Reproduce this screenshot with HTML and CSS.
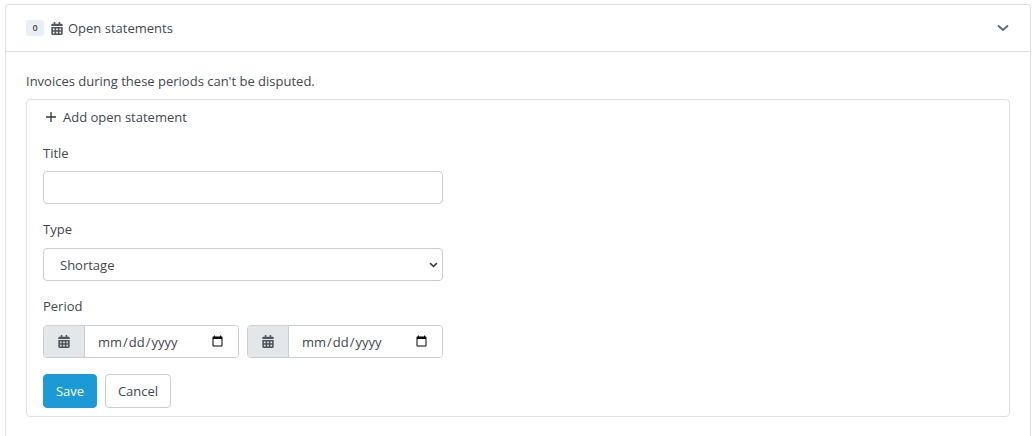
FILE: index.html
```html
<!DOCTYPE html>
<html lang="en">
<head>
    <meta charset="UTF-8">
    <meta name="viewport" content="width=device-width, initial-scale=1.0">
    <title>Open statements</title>
    <link rel="stylesheet" href="styles.css">
</head>
<body>
    <div class="card">
        <div class="card-header">
            <div class="header-title">
                <span class="badge">0</span>
                <svg class="icon-cal" viewBox="0 0 448 512"><path d="M0 464c0 26.500 21.500 48 48 48h352c26.500 0 48-21.500 48-48V192H0v272zm64-196c0-6.600 5.400-12 12-12h40c6.600 0 12 5.400 12 12v40c0 6.600-5.400 12-12 12H76c-6.600 0-12-5.400-12-12v-40zm0 128c0-6.600 5.400-12 12-12h40c6.600 0 12 5.400 12 12v40c0 6.600-5.400 12-12 12H76c-6.600 0-12-5.400-12-12v-40zm128-128c0-6.600 5.400-12 12-12h40c6.600 0 12 5.400 12 12v40c0 6.600-5.400 12-12 12h-40c-6.600 0-12-5.400-12-12v-40zm0 128c0-6.600 5.400-12 12-12h40c6.600 0 12 5.400 12 12v40c0 6.600-5.400 12-12 12h-40c-6.600 0-12-5.400-12-12v-40zm128-128c0-6.600 5.400-12 12-12h40c6.600 0 12 5.400 12 12v40c0 6.600-5.400 12-12 12h-40c-6.600 0-12-5.400-12-12v-40zm0 128c0-6.600 5.400-12 12-12h40c6.600 0 12 5.400 12 12v40c0 6.600-5.400 12-12 12h-40c-6.600 0-12-5.400-12-12v-40zM400 64h-48V16c0-8.800-7.200-16-16-16h-32c-8.800 0-16 7.200-16 16v48H160V16c0-8.800-7.200-16-16-16h-32c-8.800 0-16 7.200-16 16v48H48C21.500 64 0 85.500 0 112v48h448v-48c0-26.500-21.500-48-48-48z"/></svg>
                <span>Open statements</span>
            </div>
            <svg class="chevron" viewBox="0 0 12 8"><path d="M1 1.500L6 6l5-4.500" fill="none" stroke="#5c6873" stroke-width="1.800"/></svg>
        </div>
        <div class="card-body">
            <p class="intro">Invoices during these periods can't be disputed.</p>
            <div class="inner-box">
                <div class="add-row">
                    <svg class="plus" viewBox="0 0 10 10"><path d="M5 0v10M0 5h10" stroke="#33393f" stroke-width="1.300"/></svg>
                    <span>Add open statement</span>
                </div>
                <form class="statement-form">
                    <label class="field-label">Title</label>
                    <input class="form-control title-input" type="text">

                    <label class="field-label type-label">Type</label>
                    <div class="select-wrap">
                        <select class="form-control type-select">
                            <option>Shortage</option>
                        </select>
                        <svg class="select-arrow" viewBox="0 0 10 7"><path d="M1 1.300l4 4 4-4" fill="none" stroke="#33393f" stroke-width="1.700"/></svg>
                    </div>

                    <label class="field-label">Period</label>
                    <div class="period-row">
                        <div class="input-group">
                            <span class="group-addon">
                                <svg class="icon-cal" viewBox="0 0 448 512"><path d="M0 464c0 26.500 21.500 48 48 48h352c26.500 0 48-21.500 48-48V192H0v272zm64-196c0-6.600 5.400-12 12-12h40c6.600 0 12 5.400 12 12v40c0 6.600-5.400 12-12 12H76c-6.600 0-12-5.400-12-12v-40zm0 128c0-6.600 5.400-12 12-12h40c6.600 0 12 5.400 12 12v40c0 6.600-5.400 12-12 12H76c-6.600 0-12-5.400-12-12v-40zm128-128c0-6.600 5.400-12 12-12h40c6.600 0 12 5.400 12 12v40c0 6.600-5.400 12-12 12h-40c-6.600 0-12-5.400-12-12v-40zm0 128c0-6.600 5.400-12 12-12h40c6.600 0 12 5.400 12 12v40c0 6.600-5.400 12-12 12h-40c-6.600 0-12-5.400-12-12v-40zm128-128c0-6.600 5.400-12 12-12h40c6.600 0 12 5.400 12 12v40c0 6.600-5.400 12-12 12h-40c-6.600 0-12-5.400-12-12v-40zm0 128c0-6.600 5.400-12 12-12h40c6.600 0 12 5.400 12 12v40c0 6.600-5.400 12-12 12h-40c-6.600 0-12-5.400-12-12v-40zM400 64h-48V16c0-8.800-7.200-16-16-16h-32c-8.800 0-16 7.200-16 16v48H160V16c0-8.800-7.200-16-16-16h-32c-8.800 0-16 7.200-16 16v48H48C21.500 64 0 85.500 0 112v48h448v-48c0-26.500-21.500-48-48-48z"/></svg>
                            </span>
                            <input class="date-input" type="date">
                        </div>
                        <div class="input-group">
                            <span class="group-addon">
                                <svg class="icon-cal" viewBox="0 0 448 512"><path d="M0 464c0 26.500 21.500 48 48 48h352c26.500 0 48-21.500 48-48V192H0v272zm64-196c0-6.600 5.400-12 12-12h40c6.600 0 12 5.400 12 12v40c0 6.600-5.400 12-12 12H76c-6.600 0-12-5.400-12-12v-40zm0 128c0-6.600 5.400-12 12-12h40c6.600 0 12 5.400 12 12v40c0 6.600-5.400 12-12 12H76c-6.600 0-12-5.400-12-12v-40zm128-128c0-6.600 5.400-12 12-12h40c6.600 0 12 5.400 12 12v40c0 6.600-5.400 12-12 12h-40c-6.600 0-12-5.400-12-12v-40zm0 128c0-6.600 5.400-12 12-12h40c6.600 0 12 5.400 12 12v40c0 6.600-5.400 12-12 12h-40c-6.600 0-12-5.400-12-12v-40zm128-128c0-6.600 5.400-12 12-12h40c6.600 0 12 5.400 12 12v40c0 6.600-5.400 12-12 12h-40c-6.600 0-12-5.400-12-12v-40zm0 128c0-6.600 5.400-12 12-12h40c6.600 0 12 5.400 12 12v40c0 6.600-5.400 12-12 12h-40c-6.600 0-12-5.400-12-12v-40zM400 64h-48V16c0-8.800-7.200-16-16-16h-32c-8.800 0-16 7.200-16 16v48H160V16c0-8.800-7.200-16-16-16h-32c-8.800 0-16 7.200-16 16v48H48C21.500 64 0 85.500 0 112v48h448v-48c0-26.500-21.500-48-48-48z"/></svg>
                            </span>
                            <input class="date-input" type="date">
                        </div>
                    </div>

                    <div class="form-actions">
                        <button type="button" class="btn btn-save">Save</button>
                        <button type="button" class="btn btn-cancel">Cancel</button>
                    </div>
                </form>
            </div>
        </div>
    </div>
</body>
</html>
```

FILE: styles.css
```css
body {
    margin: 0;
    padding: 4px 5px 0;
    background: #fff;
    color: #3f474f;
    font-family: "Open Sans", sans-serif;
    font-size: 13px;
    line-height: 20px;
}

.card {
    border: 1px solid #dfdfdf;
    border-bottom: 0;
    border-radius: 4px 4px 0 0;
    height: 432px;
    box-sizing: border-box;
}

.card-header {
    height: 47px;
    box-sizing: border-box;
    border-bottom: 1px solid #dfdfdf;
    padding: 0 20px;
    display: flex;
    align-items: center;
    justify-content: space-between;
}

.header-title {
    display: flex;
    align-items: center;
}

.badge {
    width: 18px;
    height: 16px;
    margin-right: 7px;
    border-radius: 3px;
    background: #e8f0f6;
    font-size: 9px;
    font-weight: 600;
    line-height: 16px;
    text-align: center;
}

.icon-cal {
    width: 12px;
    height: 13px;
    margin-right: 5px;
    fill: #4f565d;
}

.chevron {
    width: 12px;
    height: 8px;
    margin-right: 1px;
}

.card-body {
    padding: 19px 20px 0;
}

.intro {
    margin: 0 0 8px;
}

.inner-box {
    border: 1px solid #dfdfdf;
    border-radius: 4px;
    height: 318px;
    box-sizing: border-box;
    padding: 7px 16px 0;
}

.add-row {
    display: flex;
    align-items: center;
    height: 20px;
    padding-left: 3px;
}

.plus {
    width: 10px;
    height: 10px;
    margin-right: 7px;
}

.statement-form {
    width: 400px;
    display: flex;
    flex-direction: column;
}

.field-label {
    display: block;
    height: 20px;
    margin-bottom: 8px;
}

.title-input + .field-label,
.select-wrap + .field-label {
    margin-top: 15px;
}

.statement-form > .field-label:first-child {
    margin-top: 16px;
}

.statement-form > .type-label {
    margin-bottom: 9px;
}

.form-control {
    display: block;
    width: 100%;
    height: 33px;
    box-sizing: border-box;
    border: 1px solid #c8ced3;
    border-radius: 4px;
    background: #fff;
    color: #3f474f;
    font: inherit;
    padding: 0 16px;
}

.select-wrap {
    position: relative;
    height: 33px;
}

.type-select {
    appearance: none;
}

.select-arrow {
    position: absolute;
    top: 14px;
    right: 5px;
    width: 9px;
    height: 6px;
}

.period-row {
    display: flex;
    gap: 8px;
    margin-top: 1px;
}

.input-group {
    flex: 1;
    display: flex;
    height: 33px;
    box-sizing: border-box;
    border: 1px solid #c8ced3;
    border-radius: 4px;
    overflow: hidden;
}

.group-addon {
    width: 41px;
    flex: none;
    display: flex;
    align-items: center;
    justify-content: center;
    background: #e4e7ea;
    border-right: 1px solid #c8ced3;
    box-sizing: border-box;
}

.group-addon .icon-cal {
    margin: 0;
}

.date-input {
    flex: 1;
    min-width: 0;
    border: 0;
    outline: 0;
    padding: 0 12px;
    background: #fff;
    color: #3f474f;
    font: inherit;
}

.form-actions {
    display: flex;
    gap: 8px;
    margin-top: 16px;
}

.btn {
    height: 34px;
    box-sizing: border-box;
    border-radius: 4px;
    font: inherit;
    padding: 0;
}

.btn-save {
    width: 54px;
    border: 1px solid #1b9ad6;
    background: #1b9ad6;
    color: #fff;
}

.btn-cancel {
    width: 66px;
    border: 1px solid #c8ced3;
    background: #fff;
    color: #3f474f;
}
```
